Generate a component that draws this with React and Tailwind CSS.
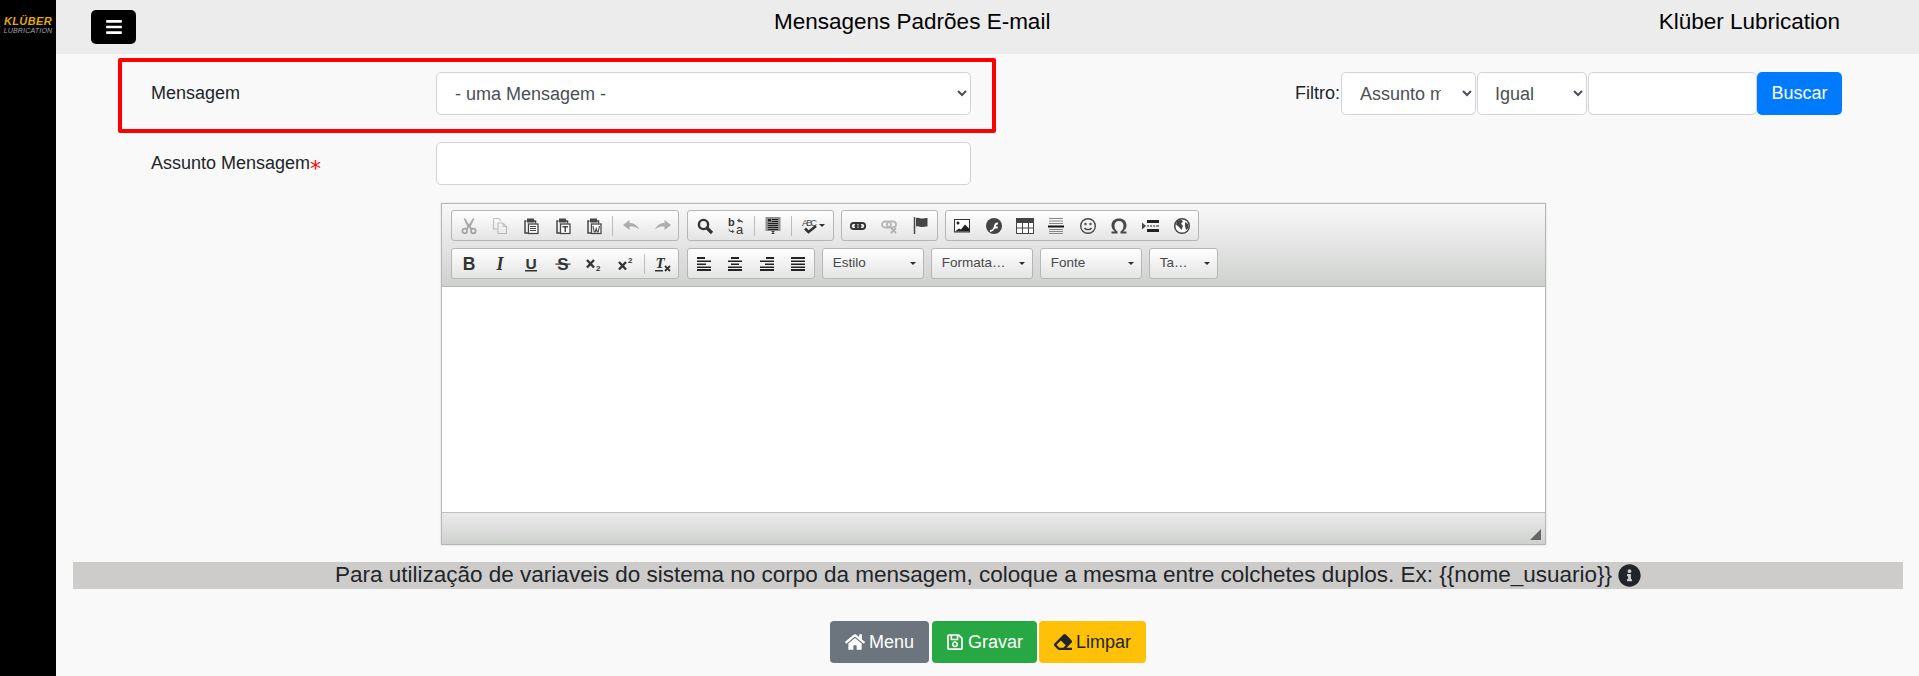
import React from "react";
import { FaBars, FaHome, FaRegSave, FaEraser, FaInfoCircle } from "react-icons/fa";

const I = ({ children, o = 1 }) => (
  <svg width="16" height="16" viewBox="0 0 16 16" style={{ opacity: o, overflow: "visible" }} fill="#474747" stroke="none">{children}</svg>
);
const L = (p) => <path fill="none" stroke="#474747" strokeWidth="1.100" {...p} />;

const clip = (inner) => (
  <I>
    <path d="M3.500 3h-1.500v12h3M11 3h1.500v2.500" fill="none" stroke="#474747" strokeWidth="1.500" />
    <rect x="4" y="0.500" width="7" height="4" fill="#474747" />
    <rect x="5.500" y="6" width="9.500" height="9.500" fill="#fff" stroke="#474747" strokeWidth="1.300" />
    {inner}
  </I>
);

const icons = {
  cut: <I o={0.42}><path d="M4 0l4 6.500L12 0l1.300 1-3.600 7.500 1.800 2.500-1.800 1L8 9.500 6.300 12l-1.800-1 1.800-2.500L2.700 1z" /><circle cx="3.700" cy="13" r="2.300" fill="none" stroke="#474747" strokeWidth="1.800" /><circle cx="12.300" cy="13" r="2.300" fill="none" stroke="#474747" strokeWidth="1.800" /></I>,
  copy: <I o={0.3}><L d="M1.500 0.500h5.500l2 2.500M1.500 0.500v10.500h4" /><L d="M6 5h5l3.500 3.500v7H6zM11 5v3.500h3.500" /></I>,
  paste: clip(<path d="M7 8.500h6M7 10.500h6M7 12.500h6" stroke="#474747" fill="none" />),
  pastet: clip(<path d="M7.500 8h5.500v1.500h-2v4.500H9.500V9.500h-2z" />),
  pastew: clip(<path d="M7 8l1.200 6h1l1-3.500 1 3.500h1L13.500 8" fill="none" stroke="#474747" strokeWidth="1.100" />),
  undo: <I o={0.4}><path d="M0 7l6.500-5v3c4.500 0 8 2.500 9.500 6.500-2.500-2.500-5.500-3-9.500-3v3.500z" /></I>,
  redo: <I o={0.4}><path d="M16 7L9.500 2v3C5 5 1.500 7.500 0 11.500c2.500-2.500 5.500-3 9.500-3V12z" /></I>,
  find: <I><circle cx="6.500" cy="6.500" r="4.600" fill="none" stroke="#333" strokeWidth="2.400" /><path d="M10 10l5 5" stroke="#333" strokeWidth="3.200" /></I>,
  replace: <I><text x="0" y="8" fontSize="11" fontFamily="Liberation Sans" fontWeight="700" fill="#333">b</text><text x="8" y="16" fontSize="13" fontFamily="Liberation Sans" fill="#333">a</text><path d="M9 2.500l2.500-2.200v1.700c2 0 3.500 1 3.500 3.200-1-1-2.300-1.400-3.500-1.400v1z" /><path d="M1 10c0 2 1 3 3 3v-1.200l2.500 1.700L4 15.200V14c-2.500 0-4-1.500-3-4z" /></I>,
  selectall: <I><rect x="0.500" y="-1" width="15" height="14" fill="#8f8f8f" /><path d="M3 1h3v2.500H3zM7 1h6v1H7zM7 3h6v1H7zM3 5h10v1H3zM3 7h10v1H3zM3 9h10v1H3zM3 11h10v1H3z" fill="#222" /><path d="M6.500 13h3v.8H8.500v1.400h1v.8h-3v-.8h1v-1.400h-1z" fill="#222" /></I>,
  spell: <I><text x="0" y="7.500" fontSize="9" fontFamily="Liberation Sans" fill="#474747" textLength="15">ABC</text><path d="M3 10.500l3.500 3.500L14 8" fill="none" stroke="#333" strokeWidth="2.600" /></I>,
  link: <I><rect x="0.800" y="5" width="9.500" height="6" rx="3" fill="none" stroke="#333" strokeWidth="1.800" /><rect x="5.700" y="5" width="9.500" height="6" rx="3" fill="none" stroke="#333" strokeWidth="1.800" /><path d="M4.500 8h7" stroke="#333" strokeWidth="1.500" /></I>,
  unlink: <I o={0.3}><rect x="1" y="3.500" width="9" height="6" rx="3" fill="none" stroke="#333" strokeWidth="1.800" /><rect x="6" y="3.500" width="9" height="6" rx="3" fill="none" stroke="#333" strokeWidth="1.800" /><path d="M10 10l5 5M15 10l-5 5" stroke="#333" strokeWidth="1.800" /></I>,
  anchor: <I><path d="M1.500 -1v17" stroke="#474747" strokeWidth="1.500" /><path d="M3 0c3-1 4 .6 6 .6s3-.6 5.500-.6v8.500c-2.500 0-3.500.6-5.500.6S6 7.500 3 8.500z" /></I>,
  image: <I><rect x="0.500" y="1.500" width="15" height="12.500" fill="#fff" stroke="#333" /><circle cx="4" cy="5" r="1.500" fill="#222" /><path d="M1 13.500l4-3 2 1 4-5 4 4v3z" fill="#222" /></I>,
  flash: <I><circle cx="8" cy="8" r="8" fill="#444" /><path d="M4 12c2.500 0 3-1 4-4s1.500-3.500 4-3.500v2c-1.500 0-1.800.5-2.300 2h2v2h-2.800c-1 1.500-2.400 3-4.900 3.500z" fill="#fff" /></I>,
  table: <I><rect x="-1" y="0" width="18" height="16" fill="#444" /><path d="M0 5h5v4.500H0zM6 5h5v4.500H6zM12 5h4v4.500h-4zM0 10.500h5V15H0zM6 10.500h5V15H6zM12 10.500h4V15h-4z" fill="#fff" /></I>,
  hr: <I><path d="M1 0h14v1H1zM1 2.500h14v1H1zM1 5h14v1H1zM1 11h14v1H1zM1 13h14v1H1zM1 15h14v1H1z" fill="#888" /><path d="M0 7.500h16v2H0z" fill="#111" /></I>,
  smiley: <I><circle cx="8" cy="8" r="7.300" fill="none" stroke="#474747" strokeWidth="1.400" /><circle cx="5.500" cy="6" r="1.200" /><circle cx="10.500" cy="6" r="1.200" /><path d="M4.500 10c1.500 2.200 5.500 2.200 7 0" fill="none" stroke="#474747" strokeWidth="1.400" /></I>,
  omega: <I><path d="M0.500 15.500v-2h3.500C2 12 .5 10 .5 7.500.5 3 3.700.5 8 .5s7.500 2.500 7.500 7c0 2.500-1.500 4.500-3.500 6h3.500v2h-6v-2c2-1 3-3.200 3-5.800 0-2.900-1.800-4.700-4.500-4.700S3.500 4.800 3.500 7.700c0 2.600 1 4.800 3 5.800v2z" /></I>,
  pagebreak: <I><path d="M-1 4.500l4 3.500-4 3.500z" /><path d="M4 2h12v3H4zM4 11h12v3H4z" fill="#222" /><path d="M4 7.500h2v1H4zM7 7.500h2v1H7zM10 7.500h2v1h-2zM13 7.500h3v1h-3z" fill="#222" /></I>,
  iframe: <I><circle cx="8" cy="8" r="7.300" fill="#fff" stroke="#444" strokeWidth="1.500" /><path d="M3 3l4-1.500 2 2-2 2 2 2.500-1.500 4L5 9 2 6.500zM11 4l3 2 .5 4-2.500 2-1-4z" fill="#444" /></I>,
  bold: <I><text x="8" y="14" textAnchor="middle" fontSize="17.500" fontWeight="700" fontFamily="Liberation Sans" fill="#333">B</text></I>,
  italic: <I><text x="8" y="14" textAnchor="middle" fontSize="18" fontWeight="700" fontStyle="italic" fontFamily="Liberation Serif" fill="#333">I</text></I>,
  underline: <I><text x="8" y="12.500" textAnchor="middle" fontSize="15.500" fontWeight="700" fontFamily="Liberation Sans" fill="#333">U</text><rect x="2" y="14" width="12" height="1.500" fill="#333" /></I>,
  strike: <I><text x="8" y="14" textAnchor="middle" fontSize="17" fontWeight="700" fontFamily="Liberation Sans" fill="#333">S</text><rect x="0.500" y="7.500" width="15" height="1.200" fill="#333" /></I>,
  sub: <I><path d="M1 4l7 7.500M8 4L1 11.500" stroke="#333" strokeWidth="2.400" fill="none" /><text x="10" y="15" fontSize="8" fontWeight="700" fontFamily="Liberation Sans" fill="#333">2</text></I>,
  sup: <I><path d="M1 6l7 7.500M8 6L1 13.500" stroke="#333" strokeWidth="2.400" fill="none" /><text x="10" y="7" fontSize="8" fontWeight="700" fontFamily="Liberation Sans" fill="#333">2</text></I>,
  removeformat: <I><text x="0.500" y="12" fontSize="15" fontWeight="700" fontStyle="italic" fontFamily="Liberation Serif" fill="#333">T</text><rect x="0" y="14" width="8" height="1.500" fill="#333" /><path d="M10 10l5 5M15 10l-5 5" stroke="#333" strokeWidth="1.800" /></I>,
  left: <I><path d="M1 1h8v2H1zM1 4.500h14v1.500H1zM1 7.500h9v1.500H1zM1 10.500h14v1.500H1zM1 13h14v2H1z" fill="#222" /></I>,
  center: <I><path d="M4 1h8v2H4zM1 4.500h14v1.500H1zM4 7.500h8v1.500H4zM1 10.500h14v1.500H1zM1 13h14v2H1z" fill="#222" /></I>,
  right: <I><path d="M7 1h8v2H7zM1 4.500h14v1.500H1zM6 7.500h9v1.500H6zM1 10.500h14v1.500H1zM1 13h14v2H1z" fill="#222" /></I>,
  justify: <I><path d="M1 1h14v2H1zM1 4.500h14v1.500H1zM1 7.500h14v1.500H1zM1 10.500h14v1.500H1zM1 13h14v2H1z" fill="#222" /></I>,
};

const Btn = ({ name }) => (
  <span className="flex h-[28px] w-[31.4px] items-center justify-center">{icons[name]}</span>
);
const Sep = () => (
  <span className="flex h-[28px] w-[5.5px] items-center justify-center">
    <span className="h-[20px] w-px bg-[#bcbcbc]" />
  </span>
);
const Group = ({ children, first, flush }) => (
  <div className={`flex h-[31px] items-center rounded-[3px] border border-[#b6b6b6] bg-gradient-to-b from-[#ffffff] to-[#e4e4e4] ${flush ? "" : "pl-px"} ${first ? "mr-px" : ""}`}>
    {children}
  </div>
);
const Combo = ({ label, w }) => (
  <div className={`flex h-[31px] items-center justify-between rounded-[3px] border border-[#b6b6b6] bg-gradient-to-b from-[#ffffff] to-[#e4e4e4] pl-[10px] pr-[7px] text-[13.500px] text-[#484848] ${w}`}>
    <span>{label}</span>
    <span className="h-0 w-0 border-x-[3px] border-t-[3px] border-x-transparent border-t-[#2f2f2f]" />
  </div>
);

const Toolbar = () => (
  <div className="flex h-[83px] flex-col gap-[7px] border-b border-[#b6b6b6] bg-gradient-to-b from-[#f8f8f8] to-[#cfd1cf] pb-[7px] pl-[9px] pt-[6px]">
    <div className="flex gap-[7px]">
      <Group first>
        <Btn name="cut" /><Btn name="copy" /><Btn name="paste" /><Btn name="pastet" /><Btn name="pastew" /><Sep /><Btn name="undo" /><Btn name="redo" />
      </Group>
      <Group>
        <Btn name="find" /><Btn name="replace" /><Sep /><Btn name="selectall" /><Sep />
        <span className="flex h-[28px] w-[39px] items-center justify-center gap-px">
          {icons.spell}
          <span className="h-0 w-0 border-x-[3px] border-t-[3px] border-x-transparent border-t-[#2f2f2f]" />
        </span>
      </Group>
      <Group flush>
        <Btn name="link" /><Btn name="unlink" /><Btn name="anchor" />
      </Group>
      <Group>
        <Btn name="image" /><Btn name="flash" /><Btn name="table" /><Btn name="hr" /><Btn name="smiley" /><Btn name="omega" /><Btn name="pagebreak" /><Btn name="iframe" />
      </Group>
    </div>
    <div className="flex gap-[7px]">
      <Group first>
        <Btn name="bold" /><Btn name="italic" /><Btn name="underline" /><Btn name="strike" /><Btn name="sub" /><Btn name="sup" /><Sep /><Btn name="removeformat" />
      </Group>
      <Group flush>
        <Btn name="left" /><Btn name="center" /><Btn name="right" /><Btn name="justify" />
      </Group>
      <Combo label="Estilo" w="w-[102px]" />
      <Combo label="Formata…" w="w-[102px]" />
      <Combo label="Fonte" w="w-[102px]" />
      <Combo label="Ta…" w="w-[69px]" />
    </div>
  </div>
);

const field = "h-[43px] rounded-[5px] border border-[#ced4da] bg-white text-[18px] text-[#495057]";

export default function App() {
  return (
    <div className="relative flex h-[676px] w-full overflow-hidden bg-[#f9f9f9] font-['Liberation_Sans',Arial,sans-serif] text-[18px] text-[#212529]">
      <aside className="flex w-[56px] shrink-0 flex-col items-center bg-black pt-[16px] italic leading-none">
        <span className="text-[11px] font-bold tracking-[0.4px] text-[#e6a800]">KLÜBER</span>
        <span className="text-[7px] tracking-[0.2px] text-[#a8a8a8]">LUBRICATION</span>
      </aside>

      <main className="min-w-0 flex-1">
        <header className="flex h-[54px] items-center bg-[#ececec] pl-[35px] pr-[79px] text-[22.500px] text-black">
          <button className="flex h-[34px] w-[45px] items-center justify-center rounded-[5px] bg-black text-white">
            <FaBars className="h-[18px] w-[18px]" />
          </button>
          <h1 className="mb-[10px] ml-[638px]">Mensagens Padrões E-mail</h1>
          <span className="mb-[10px] ml-auto">Klüber Lubrication</span>
        </header>

        <section className="pl-[95px] pt-[18px]">
          <div className="flex items-center">
            <label className="w-[285px]">Mensagem</label>
            <select className={`${field} w-[535px] pl-[14px] pr-[12px]`} defaultValue="a">
              <option value="a">- uma Mensagem -</option>
            </select>
            <div className="ml-auto mr-[77px] flex items-center">
              <span className="mr-px">Filtro:</span>
              <select className={`${field} w-[135px] pl-[14px] pr-[18px]`} defaultValue="a">
                <option value="a">Assunto mensagem</option>
              </select>
              <select className={`${field} ml-px w-[110px] pl-[13px] pr-[12px]`} defaultValue="a">
                <option value="a">Igual</option>
              </select>
              <input className={`${field} ml-px w-[169px]`} />
              <button className="h-[43px] w-[85px] rounded-[5px] bg-[#007bff] text-white">Buscar</button>
            </div>
          </div>

          <div className="mt-[27px] flex items-center">
            <label className="w-[285px]">
              Assunto Mensagem<span className="relative top-[7px] font-['DejaVu_Sans'] text-[22px] leading-none text-[#ff0000]">*</span>
            </label>
            <input className={`${field} w-[535px]`} />
          </div>
        </section>

        <section className="ml-[385px] mt-[18px] flex h-[342px] w-[1105px] flex-col border border-[#b6b6b6] bg-white shadow-[0_0_2px_rgba(0,0,0,0.15)]">
          <Toolbar />
          <div className="flex-1" />
          <div className="flex h-[32px] items-end justify-end border-t border-[#bfbfbf] bg-gradient-to-b from-[#ebebeb] to-[#cfd1cf] p-[4px]">
            <span className="h-0 w-0 border-b-[11px] border-l-[11px] border-b-[#666] border-l-transparent" />
          </div>
        </section>

        <p className="ml-[17px] mt-[17px] flex h-[27px] w-[1830px] items-center justify-center gap-[6px] bg-[#cecccb] text-[22.500px] leading-none">
          Para utilização de variaveis do sistema no corpo da mensagem, coloque a mesma entre colchetes duplos. Ex: {"{{nome_usuario}}"}
          <FaInfoCircle className="h-[23px] w-[23px]" />
        </p>

        <div className="ml-[774px] mt-[32px] flex">
          <button className="flex h-[42px] w-[99px] items-center justify-center gap-[4px] rounded-[4px] bg-[#6c757d] text-white"><FaHome className="h-[20px] w-[20px]" />Menu</button>
          <button className="ml-[3px] flex h-[42px] w-[105px] items-center justify-center gap-[4px] rounded-[4px] bg-[#28a745] text-white"><FaRegSave className="h-[18px] w-[18px]" />Gravar</button>
          <button className="ml-[2px] flex h-[42px] w-[107px] items-center justify-center gap-[4px] rounded-[4px] bg-[#ffc107] text-[#212529]"><FaEraser className="h-[18px] w-[18px]" />Limpar</button>
        </div>
      </main>

      <div className="absolute left-[118px] top-[58px] h-[75px] w-[878px] rounded-[2px] border-[4px] border-[#ff0000]" />
    </div>
  );
}
